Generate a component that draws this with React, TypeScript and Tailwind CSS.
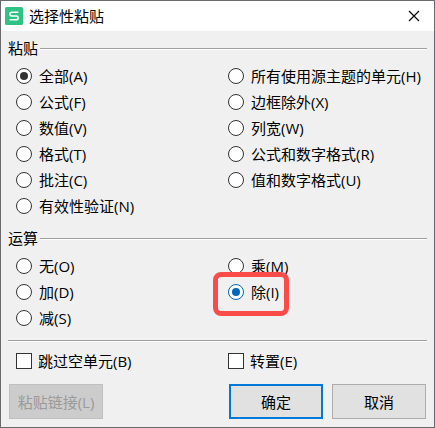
import { useState } from 'react';

type Option = { value: string; label: string };

const PASTE_LEFT: Option[] = [
  { value: 'all', label: '全部(A)' },
  { value: 'formulas', label: '公式(F)' },
  { value: 'values', label: '数值(V)' },
  { value: 'formats', label: '格式(T)' },
  { value: 'comments', label: '批注(C)' },
  { value: 'validation', label: '有效性验证(N)' },
];

const PASTE_RIGHT: Option[] = [
  { value: 'theme', label: '所有使用源主题的单元(H)' },
  { value: 'no-borders', label: '边框除外(X)' },
  { value: 'widths', label: '列宽(W)' },
  { value: 'formulas-numbers', label: '公式和数字格式(R)' },
  { value: 'values-numbers', label: '值和数字格式(U)' },
];

const OPERATION_LEFT: Option[] = [
  { value: 'none', label: '无(O)' },
  { value: 'add', label: '加(D)' },
  { value: 'subtract', label: '减(S)' },
];

const OPERATION_RIGHT: Option[] = [
  { value: 'multiply', label: '乘(M)' },
  { value: 'divide', label: '除(I)' },
];

function Rule() {
  return <div className="h-0.5 flex-1 border-t border-b border-t-[#a0a0a0] border-b-white" />;
}

function GroupHeading({ id, title }: { id: string; title: string }) {
  return (
    <div className="flex items-center gap-0.5">
      <h2 id={id}>{title}</h2>
      <div className="flex flex-1 pt-0.5">
        <Rule />
      </div>
    </div>
  );
}

type RadioColumnProps = {
  name: string;
  options: Option[];
  selected: string;
  onSelect: (value: string) => void;
  accent?: boolean;
  marked?: string;
};

function RadioColumn({ name, options, selected, onSelect, accent, marked }: RadioColumnProps) {
  const tone = accent
    ? 'checked:border-[#0067b8] checked:before:bg-[#0067b8]'
    : 'checked:before:bg-[#333333]';

  return (
    <div className="flex flex-col items-start">
      {options.map(o => (
        <label key={o.value} className="relative flex h-[26px] items-center gap-[7px] whitespace-nowrap">
          <input
            type="radio"
            name={name}
            value={o.value}
            checked={selected === o.value}
            onChange={() => onSelect(o.value)}
            className={`grid size-4 shrink-0 appearance-none place-items-center rounded-full border border-[#333333] bg-white before:size-2 before:rounded-full ${tone}`}
          />
          {o.label}
          {marked === o.value && (
            <span className="pointer-events-none absolute -top-[7px] -left-[15px] h-11 w-[76px] rounded-lg border-5 border-[#fa4d4a]" />
          )}
        </label>
      ))}
    </div>
  );
}

function CheckOption({ label }: { label: string }) {
  return (
    <label className="flex h-[26px] items-center gap-1.5 whitespace-nowrap">
      <input
        type="checkbox"
        className="size-4 shrink-0 appearance-none border border-[#333333] bg-white checked:bg-[#333333]"
      />
      {label}
    </label>
  );
}

export default function App() {
  const [paste, setPaste] = useState('all');
  const [operation, setOperation] = useState('divide');

  return (
    <div
      role="dialog"
      aria-labelledby="dialog-title"
      className="border border-[#6b696e] bg-[#f0f0f0] font-['Open_Sans','Noto_Sans_CJK_SC',sans-serif] text-[15px] leading-5 text-black"
    >
      <header className="flex h-[30px] items-center bg-white pr-3 pl-1">
        <svg viewBox="0 0 18 18" className="size-[18px]" aria-hidden="true">
          <rect width="18" height="18" rx="1.5" fill="#2fc383" />
          <path
            d="M13.4 5.2H6.8Q4.9 5.2 4.9 7.1T6.8 9H11.2Q13.1 9 13.1 10.9T11.2 12.8H4.6"
            fill="none"
            stroke="#ffffff"
            strokeWidth="1.6"
          />
        </svg>
        <h1 id="dialog-title" className="ml-1.5 flex-1">选择性粘贴</h1>
        <button type="button" aria-label="关闭" className="p-0.5">
          <svg viewBox="0 0 12 12" className="size-3" aria-hidden="true">
            <path d="M1 1L11 11M11 1L1 11" fill="none" stroke="#000000" strokeWidth="1.1" />
          </svg>
        </button>
      </header>

      <div className="px-[7px] pt-[7px] pb-2">
        <section role="radiogroup" aria-labelledby="paste-title">
          <GroupHeading id="paste-title" title="粘贴" />
          <div className="mt-[5px] grid grid-cols-[212px_1fr] pl-2">
            <RadioColumn name="paste" options={PASTE_LEFT} selected={paste} onSelect={setPaste} />
            <RadioColumn name="paste" options={PASTE_RIGHT} selected={paste} onSelect={setPaste} />
          </div>
        </section>

        <section role="radiogroup" aria-labelledby="operation-title" className="mt-[9px]">
          <GroupHeading id="operation-title" title="运算" />
          <div className="mt-[5px] grid grid-cols-[212px_1fr] pl-2">
            <RadioColumn
              name="operation"
              options={OPERATION_LEFT}
              selected={operation}
              onSelect={setOperation}
              accent
            />
            <RadioColumn
              name="operation"
              options={OPERATION_RIGHT}
              selected={operation}
              onSelect={setOperation}
              accent
              marked="divide"
            />
          </div>
        </section>

        <div className="mt-[9px] flex">
          <Rule />
        </div>

        <div className="mt-1.5 grid grid-cols-[212px_1fr] pl-2">
          <CheckOption label="跳过空单元(B)" />
          <CheckOption label="转置(E)" />
        </div>

        <div className="mt-[10px] flex gap-[9px] px-px">
          <button
            type="button"
            disabled
            className="mr-auto h-[35px] w-[94px] border border-[#bfbfbf] bg-[#cccccc] text-[#9a9a9a]"
          >
            粘贴链接(L)
          </button>
          <button type="button" className="h-[35px] w-[94px] border-2 border-[#0078d7] bg-[#e1e1e1]">
            确定
          </button>
          <button type="button" className="h-[35px] w-[94px] border border-[#adadad] bg-[#e1e1e1]">
            取消
          </button>
        </div>
      </div>
    </div>
  );
}
